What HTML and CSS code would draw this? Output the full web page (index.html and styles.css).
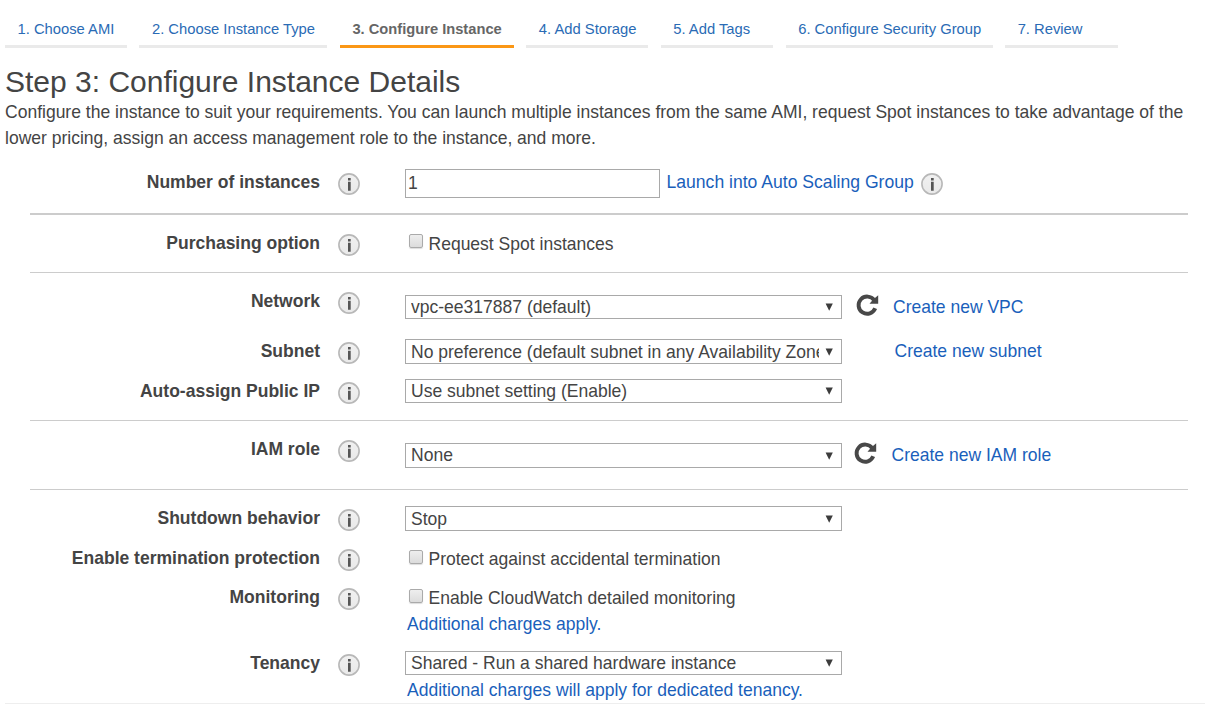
FILE: index.html
```html
<!DOCTYPE html>
<html lang="en">
<head>
<meta charset="utf-8">
<title>Step 3: Configure Instance Details</title>
<link rel="stylesheet" href="styles.css">
</head>
<body>
<svg class="sprites" width="0" height="0" aria-hidden="true">
  <defs>
    <linearGradient id="disc" x1="0" y1="0" x2="0" y2="1"><stop offset="0" stop-color="#f1f1f1"/><stop offset="1" stop-color="#e9e9e9"/></linearGradient>
    <symbol id="info" viewBox="0 0 22 22">
      <circle cx="11" cy="11" r="10.1" fill="url(#disc)" stroke="#b8b8b8" stroke-width="1.6"/>
      <path d="M10 5h2.700v2.400H10zM10 8.700h2.700v9H10z" fill="#555"/>
    </symbol>
    <symbol id="refresh" viewBox="0 0 23 23">
      <path d="M18.200 6.200A8.600 8.600 0 1 0 19.200 14.300" fill="none" stroke="#484848" stroke-width="3.900"/>
      <path d="M22.200 1.300v8.500h-8.700l2.800-3.400 2-2z" fill="#484848"/>
    </symbol>
    <symbol id="arrow" viewBox="0 0 8 8"><path d="M.6.500h7.200L4.200 7.700z" fill="#3c3c3c"/></symbol>
  </defs>
</svg>
<nav class="tabs">
  <a class="tab">1. Choose AMI</a>
  <a class="tab">2. Choose Instance Type</a>
  <a class="tab active">3. Configure Instance</a>
  <a class="tab">4. Add Storage</a>
  <a class="tab">5. Add Tags</a>
  <a class="tab">6. Configure Security Group</a>
  <a class="tab">7. Review</a>
</nav>
<header class="intro">
  <h1>Step 3: Configure Instance Details</h1>
  <p>Configure the instance to suit your requirements. You can launch multiple instances from the same AMI, request Spot instances to take advantage of the<br>lower pricing, assign an access management role to the instance, and more.</p>
</header>
<main class="form">
  <section class="group count">
    <div class="row">
      <label class="label">Number of instances</label><svg class="info"><use href="#info"/></svg>
      <div class="control"><input class="number" type="text" value="1"><a class="link launch">Launch into Auto Scaling Group</a><svg class="info after"><use href="#info"/></svg></div>
    </div>
  </section>
  <section class="group purchasing">
    <div class="row">
      <label class="label">Purchasing option</label><svg class="info"><use href="#info"/></svg>
      <div class="control check"><span class="box"></span><span>Request Spot instances</span></div>
    </div>
  </section>
  <section class="group network">
    <div class="row tall">
      <label class="label">Network</label><svg class="info"><use href="#info"/></svg>
      <div class="control low"><div class="select"><span class="value">vpc-ee317887 (default)</span><svg class="arrow"><use href="#arrow"/></svg></div><svg class="refresh"><use href="#refresh"/></svg><a class="link vpc">Create new VPC</a></div>
    </div>
    <div class="row">
      <label class="label">Subnet</label><svg class="info"><use href="#info"/></svg>
      <div class="control"><div class="select deep"><span class="value">No preference (default subnet in any Availability Zone</span><svg class="arrow"><use href="#arrow"/></svg></div><a class="link subnet">Create new subnet</a></div>
    </div>
    <div class="row">
      <label class="label">Auto-assign Public IP</label><svg class="info"><use href="#info"/></svg>
      <div class="control"><div class="select"><span class="value">Use subnet setting (Enable)</span><svg class="arrow"><use href="#arrow"/></svg></div></div>
    </div>
  </section>
  <section class="group iam">
    <div class="row">
      <label class="label">IAM role</label><svg class="info"><use href="#info"/></svg>
      <div class="control low"><div class="select deep"><span class="value raised">None</span><svg class="arrow"><use href="#arrow"/></svg></div><svg class="refresh role"><use href="#refresh"/></svg><a class="link iam-link">Create new IAM role</a></div>
    </div>
  </section>
  <section class="group advanced">
    <div class="row">
      <label class="label">Shutdown behavior</label><svg class="info"><use href="#info"/></svg>
      <div class="control"><div class="select deep"><span class="value">Stop</span><svg class="arrow"><use href="#arrow"/></svg></div></div>
    </div>
    <div class="row protection">
      <label class="label">Enable termination protection</label><svg class="info"><use href="#info"/></svg>
      <div class="control check"><span class="box"></span><span>Protect against accidental termination</span></div>
    </div>
    <div class="row monitoring">
      <label class="label">Monitoring</label><svg class="info"><use href="#info"/></svg>
      <div>
        <div class="control check"><span class="box"></span><span>Enable CloudWatch detailed monitoring</span></div>
        <a class="link note">Additional charges apply.</a>
      </div>
    </div>
    <div class="row">
      <label class="label">Tenancy</label><svg class="info"><use href="#info"/></svg>
      <div>
        <div class="control"><div class="select"><span class="value">Shared - Run a shared hardware instance</span><svg class="arrow"><use href="#arrow"/></svg></div></div>
        <a class="link note tenancy">Additional charges will apply for dedicated tenancy.</a>
      </div>
    </div>
  </section>
</main>
<footer class="rule"></footer>
</body>
</html>
```

FILE: styles.css
```css
* { box-sizing: border-box; }
body {
  margin: 0;
  height: 704px;
  overflow: hidden;
  background: #fff;
  color: #444;
  font: 17.52px/26px "Liberation Sans", Arial, sans-serif;
}
svg { display: block; flex: none; }
.sprites { position: absolute; }
.tabs {
  display: grid;
  grid-template-columns: 122px 188px 174px 122px 112.5px 207px 113px;
  column-gap: 12.45px;
  height: 48px;
  padding: 16px 0 0 5px;
  font-size: 14.77px;
  white-space: nowrap;
}
.tab {
  padding-left: 12.5px;
  border-bottom: 3px solid #eaeaea;
  color: #2a6bb5;
}
.tab.active { border-color: #fb9715; color: #666; font-weight: bold; font-size: 14.7px; }
.intro { height: 121px; padding: 17px 0 0 5px; }
h1 { margin: 0; font-size: 30px; line-height: 34px; font-weight: normal; }
p { margin: 0; white-space: nowrap; }
.form { width: 1158px; margin-left: 30px; }
.group { border-bottom: 1px solid #ccc; padding-top: 15px; }
.count { height: 46px; padding-top: 0; border-bottom-width: 2px; }
.purchasing { height: 58px; }
.network { height: 148px; }
.iam { height: 69px; }
.advanced { height: 213px; border: 0; }
.row {
  display: grid;
  grid-template-columns: 290px 85px 1fr;
  align-items: start;
  height: 40px;
  white-space: nowrap;
}
.tall { height: 50px; }
.protection { height: 39px; }
.monitoring { height: 66px; }
.label { text-align: right; font-weight: bold; }
.info { width: 22px; height: 22px; margin: 4px 0 0 18px; }
.control { display: flex; align-items: flex-start; padding-top: 1px; }
.count .control { padding-top: 0; }
.low { padding-top: 7px; }
.number {
  width: 255px;
  height: 29px;
  padding: 0 2px;
  border: 1px solid #a9a9a9;
  color: #444;
  font: inherit;
}
.link { color: #1a5fbb; }
.launch { margin-left: 6.5px; font-size: 17.58px; }
.info.after { margin-left: 7.5px; }
.select {
  display: flex;
  align-items: center;
  width: 437px;
  height: 24px;
  padding: 0 8px 0 5px;
  border: 1px solid #a9a9a9;
  line-height: 22px;
}
.deep { height: 25px; }
.value { flex: 1; min-width: 0; overflow: hidden; }
.raised { margin-bottom: 2px; }
.arrow { width: 8px; height: 8px; margin-left: 6px; }
.refresh { width: 23px; height: 23px; margin: -1px 0 0 14px; }
.role { margin-left: 12px; }
.vpc { margin: -1px 0 0 14px; }
.subnet { margin: -1px 0 0 52.5px; }
.iam-link { margin: -1px 0 0 14.5px; }
.check { gap: 5.5px; padding-left: 4px; }
.box {
  width: 14px;
  height: 14px;
  margin-top: 3px;
  border: 1px solid #aaa;
  border-radius: 2px;
  background: linear-gradient(#eee, #dcdcdc);
  box-shadow: 0 1px 1px #ddd;
}
.note { display: block; padding-left: 2px; }
.tenancy { margin-top: 2px; }
.protection .box, .monitoring .box { margin-top: 4px; }
.rule { height: 1px; margin-left: 5px; background: #eee; }
```
